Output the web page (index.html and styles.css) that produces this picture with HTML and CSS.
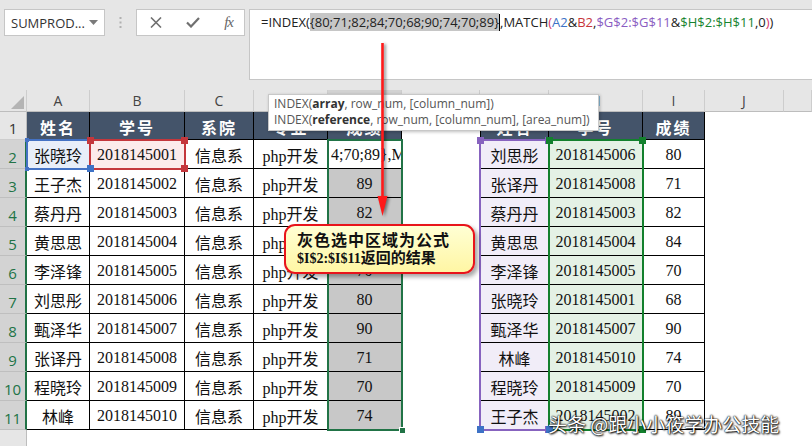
FILE: index.html
```html
<!DOCTYPE html>
<html>
<head>
<meta charset="utf-8">
<link rel="stylesheet" href="styles.css">
</head>
<body>
<div class="fbar">
  <div class="namebox"><span>SUMPROD...</span><svg class="dd" width="9" height="5" viewBox="0 0 9 5"><polygon points="0,0 9,0 4.5,5" fill="#7a7a7a"/></svg></div>
  <div class="grip"><svg width="3" height="11" viewBox="0 0 3 11"><rect x="0.5" y="0" width="2" height="2" fill="#b0b0b0"/><rect x="0.5" y="4.5" width="2" height="2" fill="#b0b0b0"/><rect x="0.5" y="9" width="2" height="2" fill="#b0b0b0"/></svg></div>
  <div class="btns">
    <svg width="12" height="11" viewBox="0 0 12 11"><path d="M1 0.5 L11 10.5 M11 0.5 L1 10.5" stroke="#707070" stroke-width="1.6" fill="none"/></svg>
    <svg width="14" height="11" viewBox="0 0 14 11"><path d="M1 5.5 L5 9.5 L13 1" stroke="#707070" stroke-width="2.2" fill="none"/></svg>
    <span class="fx">fx</span>
  </div>
  <div class="finput">=INDEX(<span class="hl">{80;71;82;84;70;68;90;74;70;89}</span><span class="caret"></span>,MATCH<span class="pk">(</span><span class="bl">A2</span>&amp;<span class="rd">B2</span>,<span class="pu">$G$2:$G$11</span>&amp;<span class="gn">$H$2:$H$11</span>,0<span class="pk">)</span>)</div>
</div>

<div class="sheet">
  <div class="grid">
    <div class="ch corner"><svg width="13" height="13" viewBox="0 0 13 13"><polygon points="13,0 13,13 0,13" fill="#b4b4b4"/></svg></div>
    <div class="ch">A</div><div class="ch">B</div><div class="ch">C</div><div class="ch">D</div><div class="ch sel">E</div><div class="ch">F</div><div class="ch">G</div><div class="ch">H</div><div class="ch">I</div><div class="ch">J</div><div class="ch"></div>

    <div class="rh">1</div>
    <div class="c hd">姓名</div><div class="c hd">学号</div><div class="c hd">系院</div><div class="c hd">专业</div><div class="c hd">成绩</div><div class="e"></div>
    <div class="c hd lb">姓名</div><div class="c hd">学号</div><div class="c hd">成绩</div><div class="e"></div><div class="e"></div>

    <div class="rh sel">2</div>
    <div class="c a2">张晓玲</div><div class="c b2">2018145001</div><div class="c">信息系</div><div class="c">php开发</div><div class="c active"><span>4;70;89},M</span></div><div class="e"></div>
    <div class="c lb pf">刘思彤</div><div class="c gf">2018145006</div><div class="c">80</div><div class="e"></div><div class="e"></div>

    <div class="rh sel">3</div>
    <div class="c">王子杰</div><div class="c">2018145002</div><div class="c">信息系</div><div class="c">php开发</div><div class="c gy">89</div><div class="e"></div>
    <div class="c lb pf">张译丹</div><div class="c gf">2018145008</div><div class="c">71</div><div class="e"></div><div class="e"></div>

    <div class="rh sel">4</div>
    <div class="c">蔡丹丹</div><div class="c">2018145003</div><div class="c">信息系</div><div class="c">php开发</div><div class="c gy">82</div><div class="e"></div>
    <div class="c lb pf">蔡丹丹</div><div class="c gf">2018145003</div><div class="c">82</div><div class="e"></div><div class="e"></div>

    <div class="rh sel">5</div>
    <div class="c">黄思思</div><div class="c">2018145004</div><div class="c">信息系</div><div class="c">php开发</div><div class="c gy">84</div><div class="e"></div>
    <div class="c lb pf">黄思思</div><div class="c gf">2018145004</div><div class="c">84</div><div class="e"></div><div class="e"></div>

    <div class="rh sel">6</div>
    <div class="c">李泽锋</div><div class="c">2018145005</div><div class="c">信息系</div><div class="c">php开发</div><div class="c gy">70</div><div class="e"></div>
    <div class="c lb pf">李泽锋</div><div class="c gf">2018145005</div><div class="c">70</div><div class="e"></div><div class="e"></div>

    <div class="rh sel">7</div>
    <div class="c">刘思彤</div><div class="c">2018145006</div><div class="c">信息系</div><div class="c">php开发</div><div class="c gy">80</div><div class="e"></div>
    <div class="c lb pf">张晓玲</div><div class="c gf">2018145001</div><div class="c">68</div><div class="e"></div><div class="e"></div>

    <div class="rh sel">8</div>
    <div class="c">甄泽华</div><div class="c">2018145007</div><div class="c">信息系</div><div class="c">php开发</div><div class="c gy">90</div><div class="e"></div>
    <div class="c lb pf">甄泽华</div><div class="c gf">2018145007</div><div class="c">90</div><div class="e"></div><div class="e"></div>

    <div class="rh sel">9</div>
    <div class="c">张译丹</div><div class="c">2018145008</div><div class="c">信息系</div><div class="c">php开发</div><div class="c gy">71</div><div class="e"></div>
    <div class="c lb pf">林峰</div><div class="c gf">2018145010</div><div class="c">74</div><div class="e"></div><div class="e"></div>

    <div class="rh sel">10</div>
    <div class="c">程晓玲</div><div class="c">2018145009</div><div class="c">信息系</div><div class="c">php开发</div><div class="c gy">70</div><div class="e"></div>
    <div class="c lb pf">程晓玲</div><div class="c gf">2018145009</div><div class="c">70</div><div class="e"></div><div class="e"></div>

    <div class="rh sel">11</div>
    <div class="c">林峰</div><div class="c">2018145010</div><div class="c">信息系</div><div class="c">php开发</div><div class="c gy">74</div><div class="e"></div>
    <div class="c lb pf">王子杰</div><div class="c gf">2018145002</div><div class="c">89</div><div class="e"></div><div class="e"></div>

    <div class="rh"></div>
  </div>

  <div class="grid overlay">
    <div class="rng r-a2"><i class="tk tl"></i><i class="tk tr"></i><i class="tk bl"></i><i class="tk br"></i></div>
    <div class="rng r-b2"><i class="hd5 tl"></i><i class="hd5 tr"></i><i class="hd5 bl"></i><i class="hd5 br"></i></div>
    <div class="rng r-e"><i class="fill"></i></div>
    <div class="rng r-g"><i class="hd5 tl"></i><i class="hd5 tr"></i><i class="hd5 bl"></i><i class="hd5 br"></i></div>
    <div class="rng r-h"><i class="hd5 tl"></i><i class="hd5 tr"></i><i class="hd5 bl"></i><i class="hd5 br"></i></div>
  </div>
</div>

<div class="tooltip">
  <div>INDEX(<b>array</b>, row_num, [column_num])</div>
  <div>INDEX(<b>reference</b>, row_num, [column_num], [area_num])</div>
</div>

<svg class="arrow" width="20" height="180" viewBox="0 0 20 180">
  <line x1="8.5" y1="3" x2="8.5" y2="160" stroke="#ff1a1a" stroke-width="2.6"/>
  <polygon points="3.5,156 13.5,156 8.5,176" fill="#ff1a1a"/>
</svg>

<div class="callout">
  <div class="l1">灰色选中区域为公式</div>
  <div class="l2"><span class="ref">$I$2:$I$11</span>返回的结果</div>
</div>

<div class="watermark">头条 @跟小小筱学办公技能</div>
</body>
</html>
```

FILE: styles.css
```css
* { box-sizing: border-box; }
html, body { margin: 0; padding: 0; }
body {
  width: 812px;
  height: 446px;
  overflow: hidden;
  position: relative;
  background: #e6e6e6;
  font-family: "Open Sans", "Noto Sans", sans-serif;
}

/* formula bar */
.fbar {
  height: 90px;
  display: flex;
  align-items: flex-start;
  padding: 9px 0 0 4px;
}
.namebox {
  width: 101px;
  height: 27px;
  background: #fff;
  border: 1px solid #c6c6c6;
  display: flex;
  align-items: center;
  justify-content: space-between;
  padding: 0 6px 0 6px;
  font-size: 13px;
  color: #333;
}
.grip {
  width: 31px;
  display: flex;
  justify-content: center;
  padding-top: 8px;
}
.btns {
  width: 109px;
  height: 27px;
  background: #fff;
  border: 1px solid #c6c6c6;
  display: flex;
  align-items: center;
  justify-content: space-between;
  padding: 0 11px 0 13px;
}
.fx {
  font-family: "Liberation Serif", serif;
  font-style: italic;
  font-size: 15px;
  color: #666;
  letter-spacing: -1px;
}
.finput {
  flex: 1;
  height: 71px;
  margin-left: 4px;
  background: #fff;
  border: 1px solid #c6c6c6;
  border-right: none;
  padding: 3px 0 0 11px;
  font-size: 13px;
  line-height: 19px;
  color: #222;
  white-space: nowrap;
}
.finput .hl { background: #c6c6c6; }
.finput .caret {
  display: inline-block;
  width: 1px;
  height: 17px;
  background: #000;
  vertical-align: -4px;
}
.pk { color: #d8366a; }
.bl { color: #3d72c6; }
.rd { color: #c8363b; }
.pu { color: #8a5cc2; }
.gn { color: #16832f; }

/* sheet */
.sheet {
  position: relative;
  height: 356px;
  overflow: hidden;
  background: #fff;
}
.grid {
  display: grid;
  grid-template-columns: 27px 63px 95px 69px 74px 74px 78px 69px 94px 62px 79px 1fr;
  grid-template-rows: 22px 28px repeat(10, 29px) 29px;
}
.overlay {
  position: absolute;
  inset: 0;
  pointer-events: none;
}
.ch {
  background: #e6e6e6;
  border-right: 1px solid #cdcdcd;
  border-bottom: 1px solid #bdbdbd;
  display: flex;
  align-items: center;
  justify-content: center;
  font-size: 14px;
  color: #444;
}
.ch.sel {
  background: #d2d2d2;
  color: #217346;
  border-bottom: 2px solid #217346;
}
.corner {
  justify-content: flex-end;
  align-items: flex-end;
  padding: 0 2px 2px 0;
}
.rh {
  background: #e6e6e6;
  border-right: 1px solid #bdbdbd;
  border-bottom: 1px solid #cdcdcd;
  display: flex;
  align-items: flex-end;
  justify-content: center;
  padding-bottom: 1px;
  font-size: 15px;
  line-height: 20px;
  color: #333;
}
.rh.sel {
  background: #d3d3d3;
  color: #217346;
  border-right: 2px solid #217346;
  border-bottom: 1px solid #bfbfbf;
}
.c {
  border-right: 1px solid #000;
  border-bottom: 1px solid #000;
  display: flex;
  align-items: center;
  justify-content: center;
  padding-top: 2px;
  font-family: "Liberation Serif", "Noto Sans CJK SC", serif;
  font-size: 16px;
  color: #111;
  white-space: nowrap;
  overflow: hidden;
  background: #fff;
}
.c.lb { border-left: 1px solid #000; }
.c.hd {
  background: #44546a;
  color: #fff;
  font-weight: bold;
  letter-spacing: 2px;
}
.e { background: #fff; }
.a2 { background: #e8eef9; }
.b2 { background: #fcebeb; }
.pf { background: #f1edf8; }
.gf { background: #e4f1e5; }
.gy { background: #c8c8c8; }
.active {
  justify-content: flex-start;
  padding-left: 3px;
}

/* reference range borders */
.rng {
  position: relative;
  margin: -1px;
}
.r-a2 { grid-column: 2; grid-row: 3; border: 2px solid #4472c4; }
.r-b2 { grid-column: 3; grid-row: 3; border: 2px solid #c4373c; }
.r-e  { grid-column: 6; grid-row: 3 / 13; border: 2px solid #217346; }
.r-g  { grid-column: 8; grid-row: 3 / 13; border: 2px solid #8763bf; }
.r-h  { grid-column: 9; grid-row: 3 / 13; border: 2px solid #13802d; }
.hd5 {
  position: absolute;
  width: 7px;
  height: 7px;
  background: currentColor;
}
.r-b2 { color: #c4373c; }
.r-g { color: #8763bf; }
.r-h { color: #13802d; }
.tl { left: -4px; top: -4px; }
.tr { right: -4px; top: -4px; }
.bl { left: -4px; bottom: -4px; }
.br { right: -4px; bottom: -4px; }
.tk {
  position: absolute;
  width: 4px;
  height: 4px;
  background: #4472c4;
}
.tk.tl { left: -3px; top: -3px; }
.tk.tr { right: -3px; top: -3px; }
.tk.bl { left: -3px; bottom: -3px; }
.tk.br { right: -3px; bottom: -3px; }
.fill {
  position: absolute;
  right: -5px;
  bottom: -5px;
  width: 7px;
  height: 7px;
  background: #217346;
  border: 1px solid #fff;
}

/* tooltip */
.tooltip {
  position: absolute;
  left: 268px;
  top: 94px;
  width: 331px;
  height: 37px;
  background: #fff;
  border: 1px solid #c8c8c8;
  box-shadow: 1px 1px 3px rgba(0,0,0,0.25);
  padding: 1px 0 0 5px;
  font-size: 12px;
  line-height: 16px;
  color: #555;
  white-space: nowrap;
}
.tooltip b { color: #333; }

/* arrow */
.arrow {
  position: absolute;
  left: 374px;
  top: 40px;
  filter: drop-shadow(2px 1px 1.5px rgba(0,0,0,0.45));
}

/* callout */
.callout {
  position: absolute;
  left: 284px;
  top: 224px;
  width: 191px;
  height: 50px;
  border: 2px solid #e8141b;
  border-radius: 11px;
  background: linear-gradient(#ffffd4, #fff6a4);
  box-shadow: 3px 3px 4px rgba(0,0,0,0.35);
  padding: 3px 0 0 11px;
  font-weight: bold;
  color: #111;
  white-space: nowrap;
}
.callout .l1 {
  font-family: "Noto Sans CJK SC", sans-serif;
  font-size: 16px;
  line-height: 20px;
  letter-spacing: 1px;
}
.callout .l2 {
  font-family: "Liberation Serif", "Noto Sans CJK SC", serif;
  font-size: 15px;
  line-height: 18px;
}
.callout .l2 .ref { font-size: 14px; }

/* watermark */
.watermark {
  position: absolute;
  left: 548px;
  top: 411px;
  font-family: "Noto Sans CJK SC", sans-serif;
  font-size: 19px;
  line-height: 26px;
  color: #fff;
  white-space: nowrap;
  text-shadow: 0 0 2px #000, 1px 1px 2px #000, 0 0 1px #000;
}
```
